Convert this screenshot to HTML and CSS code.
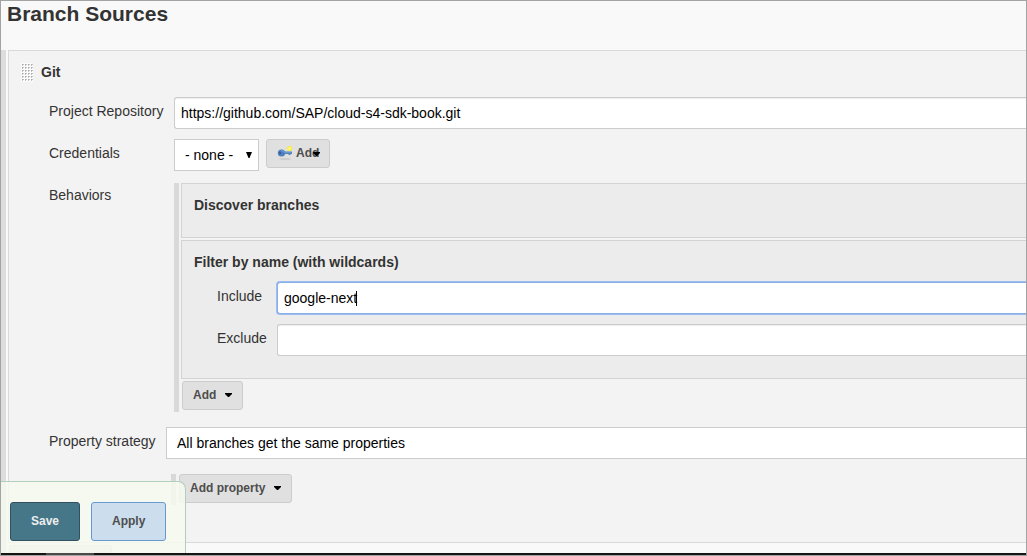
FILE: index.html
```html
<!DOCTYPE html>
<html lang="en">
<head>
<meta charset="utf-8">
<title>Branch Sources</title>
<link rel="stylesheet" href="styles.css">
</head>
<body>
<div class="frame">
  <form class="config">
    <h1 class="title">Branch Sources</h1>
    <div class="sources">
      <section class="source">
        <header class="source-head">
          <svg class="grip" width="12" height="19" viewBox="0 0 12 19" aria-hidden="true">
            <defs>
              <pattern id="dots" width="3" height="3" patternUnits="userSpaceOnUse">
                <rect width="3" height="3" fill="#fbfbfb"/>
                <path d="M1 1h2v1h-1v1h-1z" fill="#c4c4c4"/>
                <rect x="1" y="1" width="1" height="1" fill="#aaa"/>
              </pattern>
            </defs>
            <rect width="12" height="19" fill="url(#dots)"/>
          </svg>
          <h2 class="name">Git</h2>
        </header>
        <div class="row">
          <label class="label" for="repo">Project Repository</label>
          <input class="text" id="repo" type="text" value="https://github.com/SAP/cloud-s4-sdk-book.git">
        </div>
        <div class="row">
          <label class="label" for="cred">Credentials</label>
          <div class="inline">
            <span class="pick">
              <select class="select" id="cred"><option>- none -</option></select>
              <svg class="arrow" width="6" height="6" viewBox="0 0 6 6" aria-hidden="true"><path d="M0 0h6L3.500 6h-1z"/></svg>
            </span>
            <button class="btn btn-key" type="button">
              <svg width="16" height="16" viewBox="0 0 16 16" aria-hidden="true">
                <ellipse cx="8" cy="14" rx="6" ry="1" fill="#cdcdcd"/>
                <path d="M6 6.500H15V9h-1.500v1h-2V9H6z" fill="#5584bd"/>
                <ellipse cx="4.500" cy="8" rx="3.700" ry="3.500" fill="#4f7fbb"/>
                <circle cx="3" cy="8" r="1" fill="#2f5488"/>
                <path d="M4 5.500q2.500 .2 3 1.700H14" fill="none" stroke="#7fa6d6" stroke-width=".8"/>
                <circle cx="12.500" cy="3.500" r="2.600" fill="#f8ed45"/>
                <circle cx="12.500" cy="3.500" r="1" fill="#fffbb0"/>
              </svg>
              <span>Add</span>
              <svg class="caret-over" width="7" height="4" viewBox="0 0 7 4" aria-hidden="true"><path d="M0 0h7v1L4 4H3L0 1z"/></svg>
            </button>
          </div>
        </div>
        <div class="row row-behaviors">
          <span class="label">Behaviors</span>
          <div class="rail">
            <div class="blocks">
              <section class="block block-empty"><h3 class="name">Discover branches</h3></section>
              <section class="block">
                <h3 class="name">Filter by name (with wildcards)</h3>
                <div class="subrow">
                  <label class="label" for="inc">Include</label>
                  <div class="field">
                    <input class="text focused" id="inc" type="text" value="google-next">
                    <span class="cursor"></span>
                  </div>
                </div>
                <div class="subrow">
                  <label class="label" for="exc">Exclude</label>
                  <input class="text" id="exc" type="text">
                </div>
              </section>
              <button class="btn btn-add" type="button">Add
                <svg width="7" height="4" viewBox="0 0 7 4" aria-hidden="true"><path d="M0 0h7v1L4 4H3L0 1z"/></svg>
              </button>
            </div>
          </div>
        </div>
        <div class="row row-strategy">
          <label class="label" for="strategy">Property strategy</label>
          <select class="select select-wide" id="strategy"><option>All branches get the same properties</option></select>
        </div>
        <div class="row row-property">
          <div class="rail rail-property">
            <button class="btn" type="button">Add property
              <svg width="7" height="4" viewBox="0 0 7 4" aria-hidden="true"><path d="M0 0h7v1L4 4H3L0 1z"/></svg>
            </button>
          </div>
        </div>
      </section>
      <div class="next"></div>
    </div>
    <div class="savebar">
      <button class="action save" type="submit">Save</button>
      <button class="action apply" type="button">Apply</button>
    </div>
  </form>
  <footer class="strip"><div class="strip-mark"></div></footer>
</div>
</body>
</html>
```
FILE: styles.css
```css
* { box-sizing: border-box; }

body {
  margin: 0;
  background: #f9f9f9;
  color: #333;
  font: 14px/20px "Liberation Sans", Arial, sans-serif;
}

.frame {
  display: flex;
  flex-direction: column;
  min-height: 100vh;
  border: 1px solid #a3a3a3;
  overflow: hidden;
}

.config {
  position: relative;
  display: flex;
  flex: 1;
  flex-direction: column;
}

.title {
  margin: 0 0 24px;
  padding-left: 6px;
  font-size: 21px;
  line-height: 25px;
}

.sources {
  flex: 1;
  padding-left: 2px;
  border-left: 5px solid #ddd;
}

.source {
  padding: 11px 0 37px 12px;
  border: 1px solid #d9d9d9;
  border-right: 0;
  background: #f3f3f3;
}

.source-head {
  display: flex;
  align-items: center;
  gap: 8px;
  margin-bottom: 15px;
}

.name {
  margin: 0;
  font-size: 14px;
  line-height: 20px;
}

.row {
  display: grid;
  grid-template-columns: 125px 1fr;
  margin: 0 0 10px 28px;
}

.label { padding-top: 4px; }

.text,
.select {
  width: 100%;
  height: 32px;
  border: 1px solid #ccc;
  background: #fff;
  color: #000;
  font: inherit;
}

.text {
  padding: 0 6px;
  border-right: 0;
  border-radius: 3px 0 0 3px;
  box-shadow: inset 0 1px 1px #eee;
  outline: 0;
}

.select {
  padding: 0 10px;
  appearance: none;
  border-radius: 0;
}

.select-wide { border-right: 0; }

.inline {
  display: flex;
  align-items: flex-start;
  gap: 7px;
}

.pick {
  position: relative;
  width: 85px;
}

.arrow {
  position: absolute;
  top: 13px;
  right: 7px;
}

.btn {
  display: flex;
  align-items: center;
  gap: 9px;
  height: 29px;
  padding: 0 10px 2px;
  border: 1px solid #ccc;
  border-radius: 3px;
  background: #e0e0e0;
  color: #4d4d4d;
  font: bold 12px/16px "Liberation Sans", Arial, sans-serif;
  white-space: nowrap;
}

.btn-key {
  position: relative;
  gap: 3px;
}

.caret-over {
  position: absolute;
  top: 12px;
  right: 9px;
}

.row-behaviors { margin: 12px 0 15px 28px; }

.row-behaviors > .label { padding-top: 2px; }

.rail {
  padding-left: 2px;
  border-left: 5px solid #d9d9d9;
}

.blocks {
  display: flex;
  flex-direction: column;
  align-items: stretch;
  gap: 2px;
  padding-bottom: 2px;
}

.block {
  padding: 11px 0 22px 12px;
  border: 1px solid #d3d3d3;
  border-right: 0;
  background: #ececec;
}

.block .name { margin-bottom: 10px; }

.block-empty { padding-bottom: 12px; }

.subrow {
  display: grid;
  grid-template-columns: 60px 1fr;
  margin-left: 23px;
}

.subrow + .subrow { margin-top: 10px; }

.field { position: relative; }

.focused {
  border-color: #8aaeea;
  box-shadow: 0 0 0 1px #9dbdf1;
}

.cursor {
  position: absolute;
  top: 9px;
  left: 79px;
  width: 1px;
  height: 15px;
  background: #000;
}

.btn-add {
  align-self: flex-start;
  margin-left: 1px;
}

.row-strategy {
  grid-template-columns: 117px 1fr;
  margin-bottom: 15px;
}

.row-property {
  grid-template-columns: 1fr;
  margin: 0 0 0 150px;
}

.rail-property {
  padding: 0 0 2px 3px;
}

.next {
  width: 103px;
  height: 8px;
  margin: 2px 0 0 1px;
  border: 1px solid #ccc;
  border-bottom: 0;
  border-radius: 3px 3px 0 0;
  background: #e0e0e0;
}

.savebar {
  position: absolute;
  bottom: 0;
  left: 0;
  display: flex;
  gap: 11px;
  padding: 20px 19px 12px 9px;
  border: solid #b2cfbd;
  border-width: 1px 1px 0 0;
  border-radius: 0 8px 0 0;
  background: rgba(245, 249, 239, .85);
}

.action {
  height: 39px;
  padding: 0 20px 2px;
  border: 1px solid #335062;
  border-radius: 3px;
  font: bold 12px/16px "Liberation Sans", Arial, sans-serif;
}

.save {
  background: #457789;
  color: #eee;
}

.apply {
  border-color: #6699cf;
  background: #ccdded;
  color: #4d4d4d;
}

.strip {
  height: 2px;
  padding-left: 45px;
  background: #151515;
}

.strip-mark {
  width: 48px;
  height: 2px;
  background: #4a4a4a;
}
```
